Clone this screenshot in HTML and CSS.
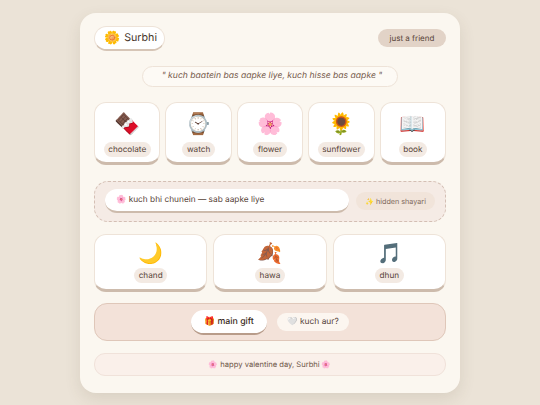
FILE: index.html
```html
<!DOCTYPE html>
<html lang="en">
<head>
  <meta charset="UTF-8">
  <meta name="viewport" content="width=device-width, initial-scale=1.0">
  <title>Surbhi</title>
  <link rel="stylesheet" href="styles.css">
</head>
<body>
  <div class="card">

    <!-- Header -->
    <div class="header">
      <div class="name-pill"><span class="name-icon">🌼</span> Surbhi</div>
      <div class="status-pill">just a friend</div>
    </div>

    <!-- Quote -->
    <div class="quote-row">
      <p class="quote">" kuch baatein bas aapke liye, kuch hisse bas aapke "</p>
    </div>

    <!-- Gift tiles -->
    <div class="tiles five">
      <div class="tile"><span class="tile-icon">🍫</span><span class="tag">chocolate</span></div>
      <div class="tile"><span class="tile-icon">⌚</span><span class="tag">watch</span></div>
      <div class="tile"><span class="tile-icon">🌸</span><span class="tag">flower</span></div>
      <div class="tile"><span class="tile-icon">🌻</span><span class="tag">sunflower</span></div>
      <div class="tile"><span class="tile-icon">📖</span><span class="tag">book</span></div>
    </div>

    <!-- Message row -->
    <div class="message-box">
      <div class="message">🌸 kuch bhi chunein — sab aapke liye</div>
      <div class="shayari">✨ hidden shayari</div>
    </div>

    <!-- Small tiles -->
    <div class="tiles three">
      <div class="tile wide"><span class="tile-icon">🌙</span><span class="tag">chand</span></div>
      <div class="tile wide"><span class="tile-icon">🍂</span><span class="tag">hawa</span></div>
      <div class="tile wide"><span class="tile-icon">🎵</span><span class="tag">dhun</span></div>
    </div>

    <!-- Gift buttons -->
    <div class="gift-box">
      <button class="gift-btn">🎁 main gift</button>
      <button class="more-btn">🤍 kuch aur?</button>
    </div>

    <div class="footer">🌸 happy valentine day, Surbhi 🌸</div>
  </div>
</body>
</html>
```

FILE: styles.css
```css
* {
  box-sizing: border-box;
}
body {
  margin: 0;
  min-height: 405px;
  background-color: #ebe3d7;
  font-family: Inter, "Noto Sans", sans-serif;
  color: #574338;
  display: flex;
  justify-content: center;
  padding-top: 12.5px;
  text-rendering: geometricPrecision;
}
.card {
  width: 380px;
  height: 380px;
  background-color: #fbf7f0;
  border-radius: 16px;
  padding: 13px 14px;
  box-shadow: 0 6px 16px rgba(90, 70, 50, 0.12);
}
.header {
  display: flex;
  justify-content: space-between;
  align-items: center;
  height: 25px;
}
.name-pill {
  height: 25px;
  width: 71px;
  padding: 0 9px;
  background-color: white;
  border: 1px solid #eee3d8;
  border-bottom: 2px solid #d6c5b6;
  border-radius: 13px;
  font-size: 10.7px;
  color: #4a382e;
  display: flex;
  align-items: center;
  gap: 4px;
}
.name-icon {
  font-size: 13px;
}
.status-pill {
  height: 18px;
  width: 68px;
  background-color: #e2d3c7;
  border-radius: 9px;
  font-size: 8px;
  display: flex;
  align-items: center;
  justify-content: center;
}
.quote-row {
  display: flex;
  justify-content: center;
  margin-top: 15px;
}
.quote {
  margin: 0;
  height: 21.5px;
  width: 256px;
  padding-left: 4px;
  background-color: #fdfaf5;
  border: 1px solid #eee3d8;
  border-radius: 11px;
  font-size: 8.6px;
  font-style: italic;
  color: #75594a;
  display: flex;
  align-items: center;
  justify-content: center;
}
.tiles {
  display: grid;
  margin-top: 15px;
}
.five {
  grid-template-columns: repeat(5, 1fr);
  gap: 5px;
}
.three {
  grid-template-columns: repeat(3, 1fr);
  gap: 6px;
  margin-top: 12px;
}
.tile {
  height: 63px;
  background-color: white;
  border: 1px solid #eee3d8;
  border-bottom: 3px solid #cdbbac;
  border-radius: 12px;
  display: flex;
  flex-direction: column;
  align-items: center;
  padding-top: 9px;
}
.tile.wide {
  height: 58px;
  padding-top: 6px;
}
.tile-icon {
  font-size: 21px;
  line-height: 26px;
}
.wide .tile-icon {
  font-size: 20px;
  line-height: 24px;
}
.tag {
  margin-top: 3.5px;
  height: 15px;
  padding: 0 4.5px;
  background-color: #f3eae3;
  border-radius: 8px;
  font-size: 8.2px;
  line-height: 15px;
}
.wide .tag {
  margin-top: 2.5px;
}
.message-box {
  margin-top: 15.5px;
  height: 41.5px;
  background-color: #f5ebe5;
  border: 1px dashed #d4bfb4;
  border-radius: 14px;
  padding: 0 10px;
  display: flex;
  align-items: center;
  justify-content: space-between;
}
.message {
  width: 244px;
  height: 24px;
  padding: 0 11px;
  background-color: white;
  border-bottom: 2px solid #cdbbac;
  border-radius: 12px;
  font-size: 8.3px;
  display: flex;
  align-items: center;
}
.shayari {
  width: 79px;
  height: 18px;
  background-color: #f1e4da;
  border-radius: 9px;
  font-size: 7.2px;
  color: #80695b;
  display: flex;
  align-items: center;
  justify-content: center;
}
.gift-box {
  margin-top: 11px;
  height: 38px;
  background-color: #f3e2d9;
  border: 1px solid #dfc7b9;
  border-radius: 13px;
  display: flex;
  align-items: center;
  justify-content: center;
  gap: 10px;
}
button {
  font-family: inherit;
  border: none;
  cursor: pointer;
  text-rendering: geometricPrecision;
}
.gift-btn {
  height: 25px;
  width: 76px;
  padding: 0;
  background-color: white;
  border-bottom: 2px solid #b89c8a;
  border-radius: 13px;
  font-size: 8.8px;
  font-weight: 500;
  color: #3a2a22;
}
.more-btn {
  height: 18px;
  width: 72px;
  padding: 0;
  background-color: #fcf6f0;
  border-radius: 9px;
  font-size: 8.4px;
  color: #574338;
}
.footer {
  margin-top: 11.5px;
  height: 23px;
  background-color: #faf0ea;
  border: 1px solid #f0e2da;
  border-radius: 11px;
  font-size: 7.6px;
  color: #6e5648;
  display: flex;
  align-items: center;
  justify-content: center;
}
```
